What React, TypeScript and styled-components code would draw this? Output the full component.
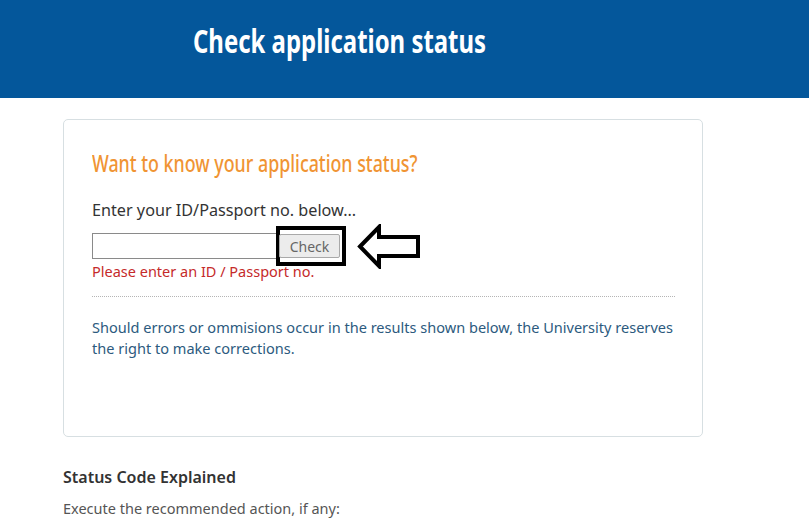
import React from "react";
import styled, { createGlobalStyle } from "styled-components";

const Global = createGlobalStyle`
  html, body { margin: 0; padding: 0; background: #fff; }
  body { font-family: "Noto Sans", "Liberation Sans", sans-serif; }
  * { box-sizing: border-box; }
`;

const Header = styled.header`
  height: 98px;
  background: #04579b;
  padding: 21px 0 0 193px;
`;

const Title = styled.h1`
  margin: 0;
  display: inline-block;
  color: #fff;
  font-family: "Noto Sans", "Liberation Sans", sans-serif;
  font-weight: 700;
  font-size: 33px;
  line-height: 40px;
  transform: scaleX(0.725);
  transform-origin: left center;
  white-space: nowrap;
`;

const Main = styled.main`
  padding: 21px 0 0 63px;
  width: 703px;
`;

const Card = styled.section`
  border: 1px solid #d7dfe2;
  border-radius: 5px;
  height: 318px;
  padding: 29px 28px 0 28px;
`;

const Question = styled.h2`
  margin: 0;
  display: inline-block;
  color: #f09433;
  font-weight: 500;
  font-size: 23px;
  line-height: 28px;
  transform: scaleX(0.775);
  transform-origin: left center;
  white-space: nowrap;
`;

const Prompt = styled.p`
  margin: 22px 0 0 0;
  color: #333;
  font-size: 16.2px;
  line-height: 22px;
`;

const FormRow = styled.div`
  display: flex;
  align-items: center;
  margin-top: 11px;
  height: 28px;
`;

const Input = styled.input`
  width: 187px;
  height: 26px;
  border: 1px solid #8a8a8a;
  border-right: none;
  padding: 0 4px;
  font-size: 14px;
  outline: none;
`;

const Highlight = styled.div`
  display: flex;
  align-items: center;
  width: 70px;
  height: 40px;
  margin-left: -3px;
  border: 4px solid #000;
`;

const Button = styled.button`
  width: 61px;
  height: 24px;
  margin-left: -1px;
  background: #ececec;
  border: 1px solid #a9a9a9;
  border-radius: 2px;
  color: #666;
  font-family: "Noto Sans", sans-serif;
  font-size: 14px;
  padding: 0;
`;

const Arrow = styled.svg`
  margin-left: 11px;
  flex: none;
`;

const ErrorText = styled.div`
  margin-top: 2px;
  color: #c52a2a;
  font-size: 14.5px;
  line-height: 18px;
`;

const Divider = styled.hr`
  margin: 16px 0 0 0;
  border: none;
  border-top: 1px dotted #b5b5b5;
  width: 583px;
`;

const Note = styled.p`
  margin: 20px 0 0 0;
  color: #2c5a7e;
  font-size: 14.55px;
  line-height: 21px;
`;

const SectionTitle = styled.h3`
  margin: 29px 0 0 0;
  color: #333;
  font-size: 16px;
  font-weight: 600;
  line-height: 22px;
`;

const SectionText = styled.p`
  margin: 10px 0 0 0;
  color: #555;
  font-size: 14.5px;
  line-height: 20px;
`;

export default function App() {
  return (
    <>
      <Global />
      <Header>
        <Title>Check application status</Title>
      </Header>
      <Main>
        <Card>
          <Question>Want to know your application status?</Question>
          <Prompt>Enter your ID/Passport no. below...</Prompt>
          <FormRow>
            <Input type="text" />
            <Highlight>
              <Button>Check</Button>
            </Highlight>
            <Arrow width="64" height="45" viewBox="0 0 64 45">
              <path
                d="M3 22.5 L22 3 L22 13 L61 13 L61 32 L22 32 L22 42 Z"
                fill="none"
                stroke="#000"
                strokeWidth="4"
                strokeLinejoin="miter"
              />
            </Arrow>
          </FormRow>
          <ErrorText>Please enter an ID / Passport no.</ErrorText>
          <Divider />
          <Note>
            Should errors or ommisions occur in the results shown below, the University reserves the right to make
            corrections.
          </Note>
        </Card>
        <SectionTitle>Status Code Explained</SectionTitle>
        <SectionText>Execute the recommended action, if any:</SectionText>
      </Main>
    </>
  );
}
